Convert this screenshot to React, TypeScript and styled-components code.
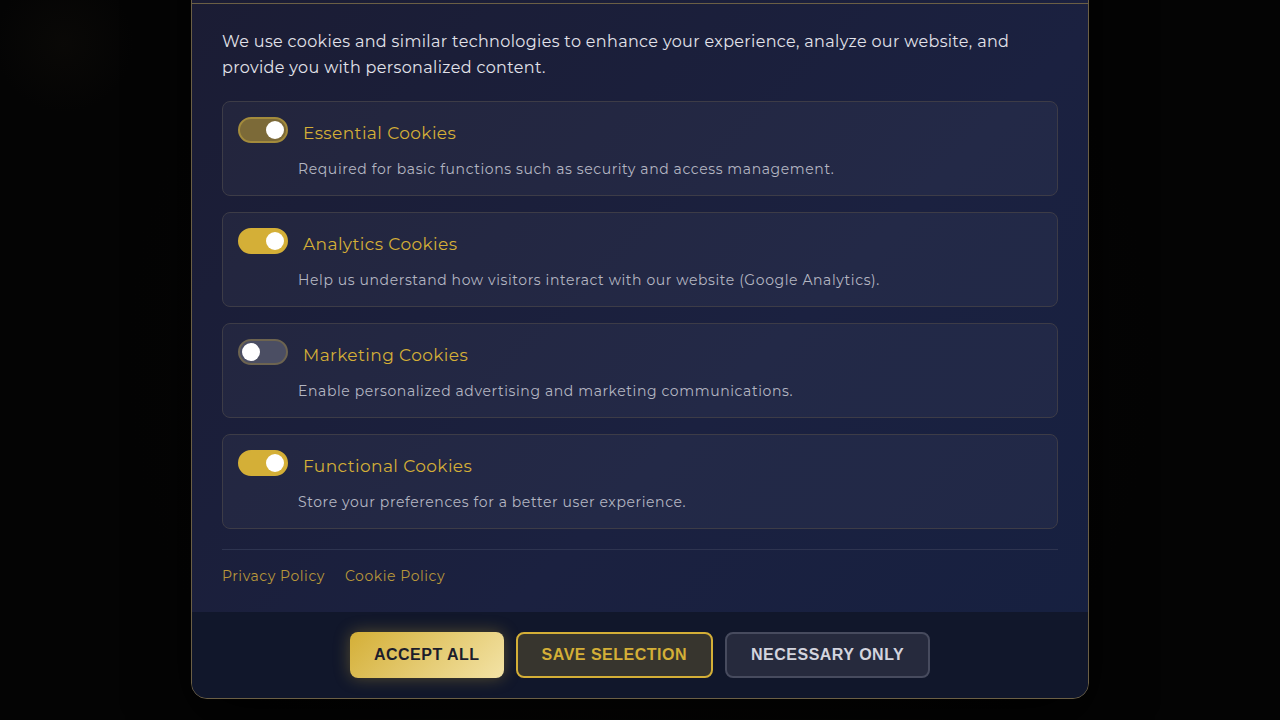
import React, { useState } from "react";
import styled, { createGlobalStyle, css } from "styled-components";

const GlobalStyle = createGlobalStyle`
  html, body {
    margin: 0;
    padding: 0;
    height: 100%;
    background: #050505;
  }
  * {
    box-sizing: border-box;
  }
`;

const Overlay = styled.div`
  height: 100vh;
  overflow: hidden;
  display: flex;
  align-items: flex-end;
  justify-content: center;
  padding-bottom: 21px;
  background:
    radial-gradient(circle at 5% 6%, rgba(50, 40, 25, 0.12), transparent 5%),
    radial-gradient(circle at 50% 50%, #0a0806, #040404 70%);
  font-family: "Montserrat", "DejaVu Sans", sans-serif;
`;

const Modal = styled.div`
  width: 898px;
  flex-shrink: 0;
  border: 1px solid #6b5f45;
  border-radius: 16px;
  overflow: hidden;
  background: linear-gradient(135deg, #1b1c33 0%, #1b2140 60%, #162040 100%);
  box-shadow: 0 20px 60px rgba(0, 0, 0, 0.8);
`;

const ModalHeader = styled.div`
  padding: 24px 30px;
  border-bottom: 1px solid #6b5f45;
`;

const ModalTitle = styled.h2`
  margin: 0;
  color: #d4af37;
  font-size: 24px;
  font-weight: 600;
`;

const Body = styled.div`
  padding: 25px 30px 25px;
`;

const Intro = styled.p`
  margin: 0 0 20px;
  color: #e2e2ea;
  font-size: 16px;
  line-height: 26px;
  letter-spacing: 0.35px;
`;

const CardList = styled.div`
  display: flex;
  flex-direction: column;
  gap: 16px;
`;

const Card = styled.div`
  border: 1px solid #3d3c47;
  border-radius: 8px;
  background: rgba(255, 255, 255, 0.04);
  padding: 15px 15px 15px;
`;

const CardHead = styled.div`
  display: flex;
  align-items: center;
  gap: 15px;
`;

const Toggle = styled.span<{ $on: boolean; $locked?: boolean }>`
  position: relative;
  width: 50px;
  height: 26px;
  border-radius: 13px;
  flex-shrink: 0;
  ${({ $on, $locked }) =>
    $locked
      ? css`
          background: #7c6a38;
          border: 2px solid #a38b3c;
        `
      : $on
      ? css`
          background: #d4af37;
          border: 2px solid #d4af37;
        `
      : css`
          background: #4b4e63;
          border: 2px solid #6d6450;
        `}
  &::after {
    content: "";
    position: absolute;
    top: 2px;
    left: ${({ $on }) => ($on ? "26px" : "2px")};
    width: 18px;
    height: 18px;
    border-radius: 50%;
    background: #ffffff;
  }
`;

const CardTitle = styled.span`
  color: #d4af37;
  font-size: 17px;
  margin-top: 5px;
  letter-spacing: 0.4px;
`;

const CardDesc = styled.p`
  margin: 16px 0 0 60px;
  color: #b4b6c2;
  font-size: 14px;
  line-height: 21px;
  letter-spacing: 0.6px;
`;

const Divider = styled.hr`
  border: none;
  border-top: 1px solid #2e3450;
  margin: 20px 0 16px;
`;

const Links = styled.div`
  display: flex;
  gap: 20px;
`;

const PolicyLink = styled.a`
  color: #b8973a;
  font-size: 14px;
  line-height: 21px;
  text-decoration: none;
  letter-spacing: 0.55px;
`;

const Footer = styled.div`
  display: flex;
  justify-content: center;
  gap: 12px;
  padding: 20px 30px;
  background: #11172b;
`;

const Button = styled.button<{ $variant: "primary" | "outline" | "muted" }>`
  height: 46px;
  padding: 0 24px;
  border-radius: 8px;
  font-family: "Liberation Sans", Arial, sans-serif;
  font-weight: 700;
  font-size: 16px;
  letter-spacing: 0.5px;
  text-transform: uppercase;
  cursor: pointer;
  ${({ $variant }) =>
    $variant === "primary"
      ? css`
          border: none;
          color: #1c1d2b;
          background: linear-gradient(135deg, #d4af37 0%, #f3e3a6 100%);
          box-shadow: 0 0 16px rgba(212, 175, 55, 0.35);
        `
      : $variant === "outline"
      ? css`
          border: 2px solid #d4af37;
          color: #d4af37;
          background: #37352e;
        `
      : css`
          border: 2px solid #474b5e;
          color: #d3d4de;
          background: #262a3d;
        `}
`;

type Category = {
  key: string;
  title: string;
  desc: string;
  locked?: boolean;
};

const categories: Category[] = [
  {
    key: "essential",
    title: "Essential Cookies",
    desc: "Required for basic functions such as security and access management.",
    locked: true,
  },
  {
    key: "analytics",
    title: "Analytics Cookies",
    desc: "Help us understand how visitors interact with our website (Google Analytics).",
  },
  {
    key: "marketing",
    title: "Marketing Cookies",
    desc: "Enable personalized advertising and marketing communications.",
  },
  {
    key: "functional",
    title: "Functional Cookies",
    desc: "Store your preferences for a better user experience.",
  },
];

function App() {
  const [prefs, setPrefs] = useState<Record<string, boolean>>({
    essential: true,
    analytics: true,
    marketing: false,
    functional: true,
  });

  const flip = (c: Category) => {
    if (c.locked) return;
    setPrefs((p) => ({ ...p, [c.key]: !p[c.key] }));
  };

  return (
    <>
      <GlobalStyle />
      <Overlay>
        <Modal>
          <ModalHeader>
            <ModalTitle>Cookie Settings</ModalTitle>
          </ModalHeader>
          <Body>
            <Intro>
              We use cookies and similar technologies to enhance your experience, analyze our
              website, and provide you with personalized content.
            </Intro>
            <CardList>
              {categories.map((c) => (
                <Card key={c.key}>
                  <CardHead>
                    <Toggle $on={prefs[c.key]} $locked={c.locked} onClick={() => flip(c)} />
                    <CardTitle>{c.title}</CardTitle>
                  </CardHead>
                  <CardDesc>{c.desc}</CardDesc>
                </Card>
              ))}
            </CardList>
            <Divider />
            <Links>
              <PolicyLink href="#">Privacy Policy</PolicyLink>
              <PolicyLink href="#">Cookie Policy</PolicyLink>
            </Links>
          </Body>
          <Footer>
            <Button $variant="primary">Accept All</Button>
            <Button $variant="outline">Save Selection</Button>
            <Button $variant="muted">Necessary Only</Button>
          </Footer>
        </Modal>
      </Overlay>
    </>
  );
}

export default App;
